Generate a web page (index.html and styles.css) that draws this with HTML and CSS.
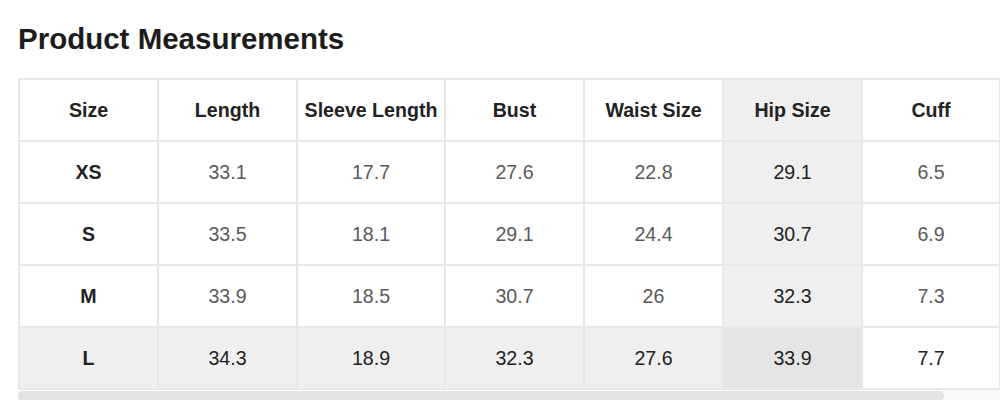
FILE: index.html
```html
<!DOCTYPE html>
<html lang="en">
<head>
<meta charset="utf-8">
<title>Product Measurements</title>
<link rel="stylesheet" href="styles.css">
</head>
<body>
<section class="measure">
  <h2 class="measure-title">Product Measurements</h2>
  <div class="scroller">
    <table class="size-table">
      <colgroup>
        <col class="c-size"><col class="c-len"><col class="c-sleeve"><col class="c-bust"><col class="c-waist"><col class="c-hip"><col class="c-cuff">
      </colgroup>
      <thead>
        <tr>
          <th>Size</th><th>Length</th><th>Sleeve Length</th><th>Bust</th><th>Waist Size</th><th class="hl-col">Hip Size</th><th>Cuff</th>
        </tr>
      </thead>
      <tbody>
        <tr>
          <td class="size">XS</td><td>33.1</td><td>17.7</td><td>27.6</td><td>22.8</td><td class="hl-col">29.1</td><td>6.5</td>
        </tr>
        <tr>
          <td class="size">S</td><td>33.5</td><td>18.1</td><td>29.1</td><td>24.4</td><td class="hl-col">30.7</td><td>6.9</td>
        </tr>
        <tr>
          <td class="size">M</td><td>33.9</td><td>18.5</td><td>30.7</td><td>26</td><td class="hl-col">32.3</td><td>7.3</td>
        </tr>
        <tr class="hl-row">
          <td class="size">L</td><td>34.3</td><td>18.9</td><td>32.3</td><td>27.6</td><td class="hl-col hl-cross">33.9</td><td class="plain">7.7</td>
        </tr>
      </tbody>
    </table>
    <div class="scrollbar"><div class="scrollbar-thumb"></div></div>
  </div>
</section>
</body>
</html>
```
FILE: styles.css
```css
html, body {
  margin: 0;
  padding: 0;
  background: #ffffff;
}

body {
  font-family: "Liberation Sans", Arial, Helvetica, sans-serif;
  color: #222222;
  overflow: hidden;
}

.measure {
  padding-left: 18px;
}

.measure-title {
  margin: 22px 0 23px 0;
  font-size: 29.5px;
  line-height: 33px;
  font-weight: 700;
  color: #1c1c1c;
}

.scroller {
  width: 982px;
  overflow: hidden;
}

.size-table {
  table-layout: fixed;
  width: 981px;
  border-collapse: collapse;
  font-size: 19.6px;
}

.c-size { width: 139px; }
.c-len { width: 139px; }
.c-sleeve { width: 148px; }
.c-bust { width: 139px; }
.c-waist { width: 139px; }
.c-hip { width: 139px; }
.c-cuff { width: 138px; }

.size-table th,
.size-table td {
  height: 62px;
  padding: 0 6px;
  border: 2px solid #e7e7e7;
  text-align: center;
  vertical-align: middle;
  white-space: nowrap;
  box-sizing: border-box;
}

.size-table th {
  font-weight: 700;
  color: #222222;
}

.size-table td {
  color: #5a5a5a;
}

.size-table td.size {
  font-weight: 700;
  color: #222222;
}

.size-table .hl-col {
  background: #efefef;
  color: #222222;
}

.size-table .hl-row td {
  background: #efefef;
  color: #222222;
}

.size-table .hl-row td.hl-cross {
  background: #e5e5e5;
}

.size-table .hl-row td.plain {
  background: #ffffff;
}

.scrollbar {
  margin-top: 1px;
  height: 10px;
  background: #f8f8f8;
}

.scrollbar-thumb {
  width: 926px;
  height: 10px;
  border-radius: 5px;
  background: #e3e3e3;
}
```
